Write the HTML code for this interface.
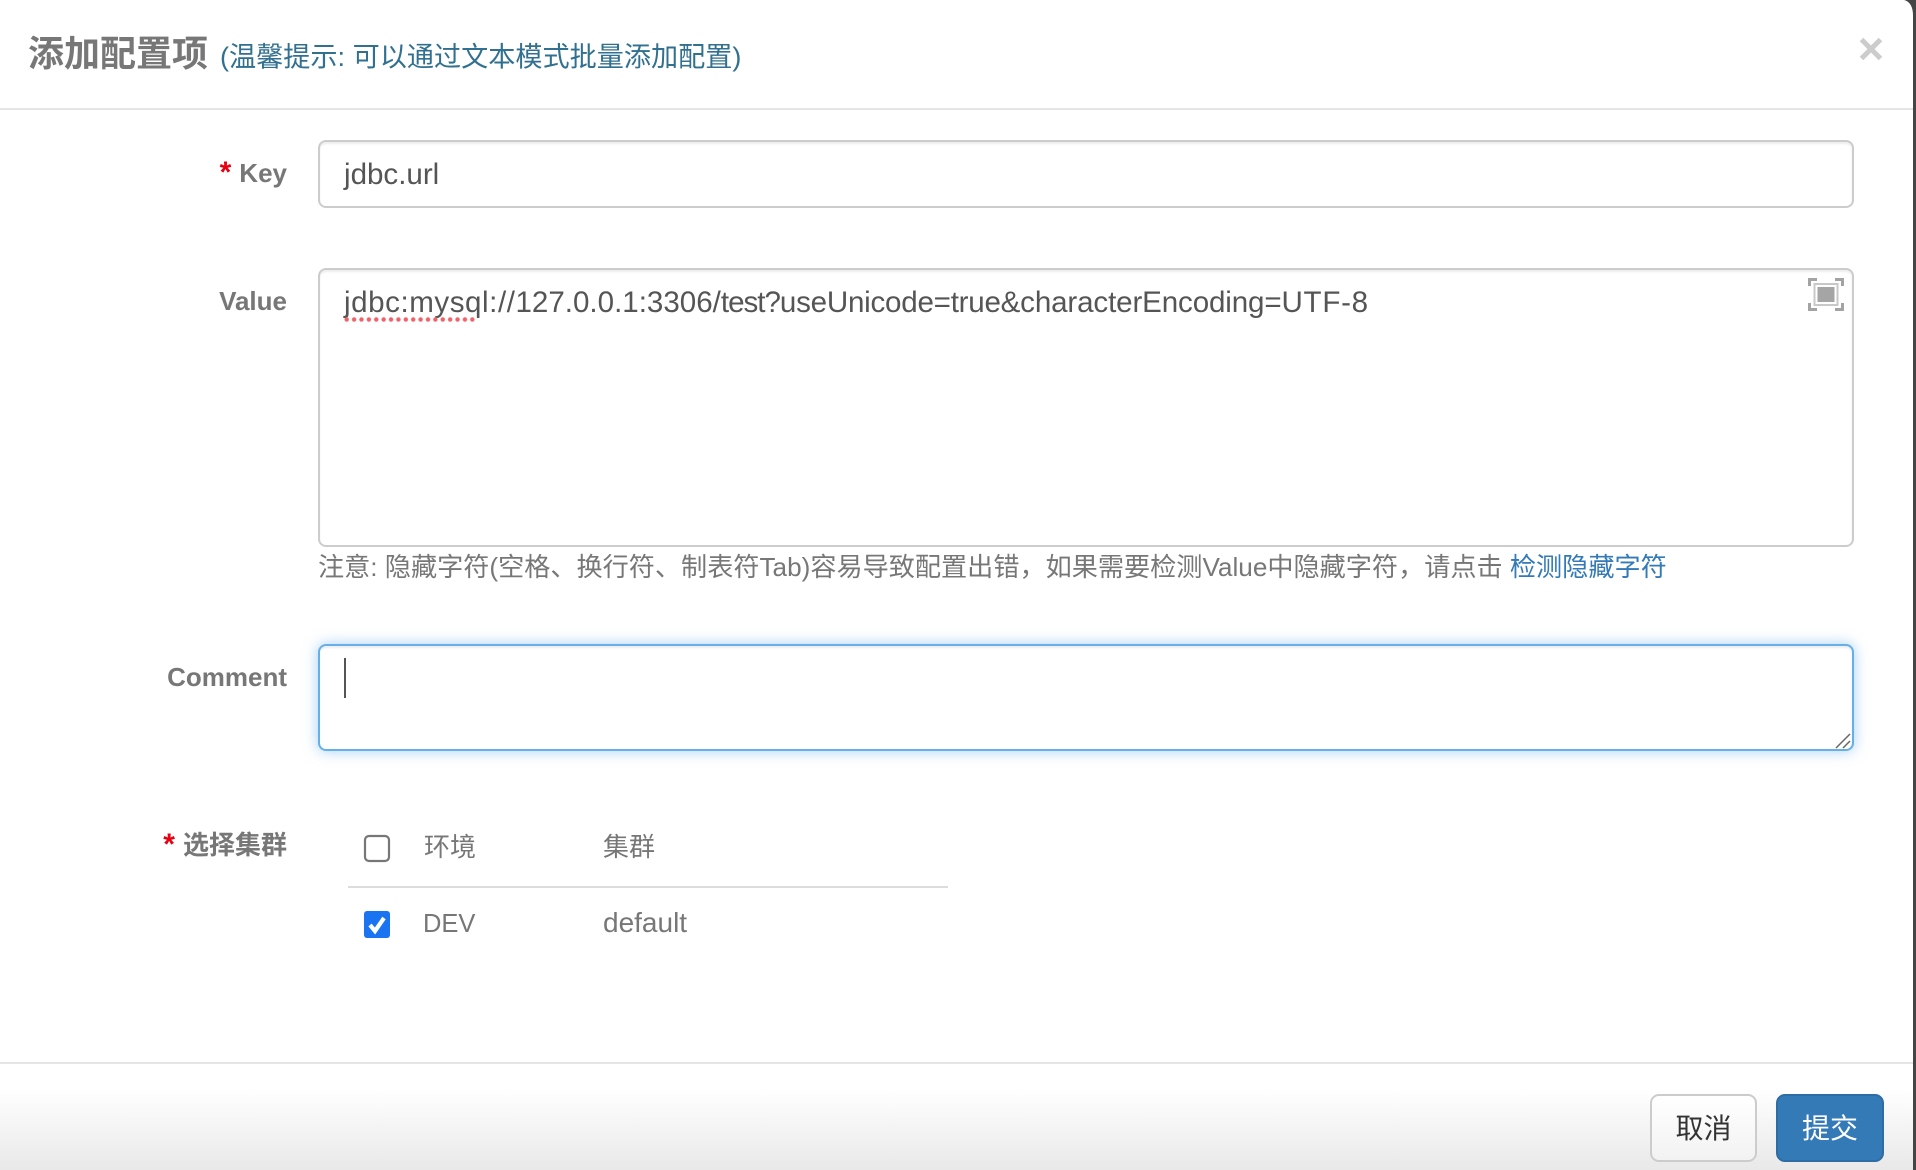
<!DOCTYPE html>
<html lang="zh">
<head>
<meta charset="utf-8">
<title>添加配置项</title>
<style>
html,body{margin:0;padding:0;width:1916px;height:1170px;overflow:hidden;background:#fff}
body{position:relative;font-family:"Liberation Sans","Noto Sans CJK SC",sans-serif;color:#777}
.a{position:absolute;white-space:nowrap}
.box{position:absolute;box-sizing:border-box;background:#fff;border:2px solid #ccc;border-radius:8px;box-shadow:inset 0 2px 2px rgba(0,0,0,.075)}
.lbl{position:absolute;right:1629px;font-size:26px;font-weight:bold;line-height:36px;color:#777;white-space:nowrap}
.lbl i{font-style:normal;color:#e60012;margin-right:8px;font-size:30px;line-height:30px}
.cell{position:absolute;font-size:26px;line-height:36px;color:#777;white-space:nowrap}
</style>
</head>
<body>
<!-- window edge -->
<div class="a" style="left:1913px;top:0;width:3px;height:1170px;background:#454545"></div>
<svg class="a" style="left:1898px;top:0" width="18" height="18"><path d="M6 0C11 1 15 6 15 15L16 15L16 0Z" fill="#454545"/></svg>

<!-- header -->
<div class="a" style="left:28px;top:30px;font-size:36px;line-height:48px;font-weight:bold;color:#777">添加配置项</div>
<div class="a" style="left:220px;top:38px;font-size:27.130px;line-height:38px;color:#31708f">(温馨提示: 可以通过文本模式批量添加配置)</div>
<svg class="a" style="left:1858px;top:36px" width="26" height="26"><path d="M3.500 3.500L22.500 22.500M22.500 3.500L3.500 22.500" stroke="#cccccc" stroke-width="5" fill="none"/></svg>
<div class="a" style="left:0;top:108px;width:1913px;height:2px;background:#e5e5e5"></div>

<!-- key -->
<div class="lbl" style="top:155px"><i>*</i>Key</div>
<div class="box" style="left:318px;top:140px;width:1536px;height:68px"></div>
<div class="a" style="left:344px;top:157px;font-size:29.560px;line-height:36px;color:#555">jdbc.url</div>

<!-- value -->
<div class="lbl" style="top:283px">Value</div>
<div class="box" style="left:318px;top:268px;width:1536px;height:279px"></div>
<div class="a" style="left:344px;top:285px;font-size:29.560px;line-height:36px;color:#555"><span style="letter-spacing:.56px">jdbc:mysql://</span>127.0.0.1:3306/<span style="letter-spacing:-1px">test?</span><span style="letter-spacing:-.23px">useUnicode=true&amp;</span><span style="letter-spacing:-.13px">characterEncoding=</span><span style="letter-spacing:.73px">UTF-8</span></div>
<div class="a" style="left:343px;top:317px;width:134px;height:5px;background:radial-gradient(circle at center,#f0626a 1.800px,transparent 2.600px) 0 0/7.400px 5px repeat-x"></div>
<svg class="a" style="left:1808px;top:278px" width="36" height="33">
<path d="M0 0H9V3H3V8H0ZM36 0H27V3H33V8H36ZM0 33H9V30H3V25H0ZM36 33H27V30H33V25H36Z" fill="#a3a3a3"/>
<rect x="6.500" y="6" width="23" height="21" fill="none" stroke="#c8c8c8" stroke-width="2"/>
<rect x="9.500" y="9" width="17" height="15" fill="#a5a5a5"/>
</svg>
<div class="a" style="left:318px;top:549px;font-size:26.150px;line-height:36px;color:#777">注意: 隐藏字符(空格、换行符、制表符Tab)容易导致配置出错，如果需要检测Value中隐藏字符，请点击 <span style="color:#337ab7">检测隐藏字符</span></div>

<!-- comment -->
<div class="lbl" style="top:659px">Comment</div>
<div class="box" style="left:318px;top:644px;width:1536px;height:107px;border-color:#66afe9;box-shadow:inset 0 2px 2px rgba(0,0,0,.075),0 0 14px rgba(102,175,233,.6)"></div>
<div class="a" style="left:344px;top:658px;width:2px;height:40px;background:#555"></div>
<svg class="a" style="left:1834px;top:732px" width="18" height="18"><path d="M2 16L16 2M9 16L16 9" stroke="#666" stroke-width="1.500" fill="none"/></svg>

<!-- cluster -->
<div class="lbl" style="top:827px"><i>*</i>选择集群</div>
<svg class="a" style="left:363px;top:834px" width="28" height="30"><rect x="2" y="2" width="24" height="25" rx="4" fill="#fff" stroke="#777" stroke-width="2.200"/></svg>
<div class="cell" style="left:424px;top:829px">环境</div>
<div class="cell" style="left:603px;top:829px">集群</div>
<div class="a" style="left:348px;top:886px;width:600px;height:2px;background:#ddd"></div>
<svg class="a" style="left:364px;top:911px" width="26" height="27"><rect width="26" height="27" rx="3" fill="#1a73f0"/><path d="M6 14L11 20L20 7" stroke="#fff" stroke-width="4.200" fill="none"/></svg>
<div class="cell" style="left:423px;top:906px;font-size:25.500px">DEV</div>
<div class="cell" style="left:603px;top:905px;font-size:28px">default</div>

<!-- footer -->
<div class="a" style="left:0;top:1062px;width:1913px;height:108px;box-sizing:border-box;border-top:2px solid #e5e5e5;background:linear-gradient(#fff 0,#fff 25px,#e8e8e8 108px)"></div>
<div class="a" style="left:1650px;top:1094px;width:107px;height:68px;box-sizing:border-box;border:2px solid #ccc;border-radius:9px;background:linear-gradient(#fff,#f2f2f2);color:#333;font-size:28px;line-height:65px;text-align:center">取消</div>
<div class="a" style="left:1776px;top:1094px;width:108px;height:68px;box-sizing:border-box;border:2px solid #2e6da4;border-radius:9px;background:#337ab7;color:#fff;font-size:28px;line-height:65px;text-align:center">提交</div>
</body>
</html>
